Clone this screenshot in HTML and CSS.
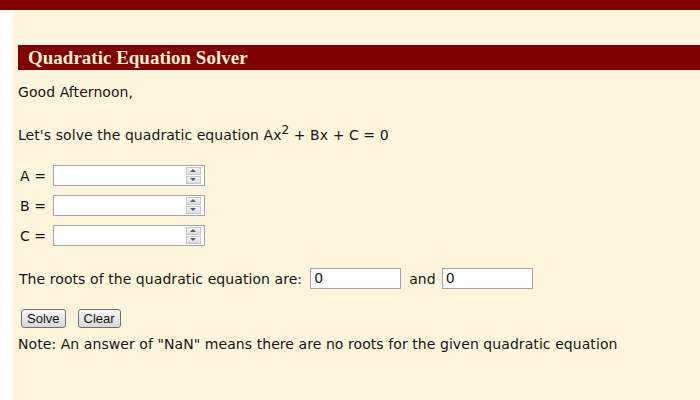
FILE: index.html
```html
<!DOCTYPE html>
<html>
<head>
<meta charset="utf-8">
<title>Quadratic Equation Solver</title>
<link rel="stylesheet" href="styles.css">
</head>
<body>
<div class="topbar"></div>
<div class="page">
  <h1 class="title">Quadratic Equation Solver</h1>
  <p class="greet">Good Afternoon,</p>
  <p class="intro">Let's solve the quadratic equation Ax<sup>2</sup> + Bx + C = 0</p>
  <div class="coeffs">
    <div class="row"><span class="lbl">A =</span><span class="num"><span class="spin"><span class="sb up"></span><span class="sb down"></span></span></span></div>
    <div class="row"><span class="lbl">B =</span><span class="num"><span class="spin"><span class="sb up"></span><span class="sb down"></span></span></span></div>
    <div class="row"><span class="lbl">C =</span><span class="num"><span class="spin"><span class="sb up"></span><span class="sb down"></span></span></span></div>
  </div>
  <div class="roots"><span>The roots of the quadratic equation are:</span><span class="out">0</span><span>and</span><span class="out">0</span></div>
  <div class="buttons"><span class="btn">Solve</span><span class="btn">Clear</span></div>
  <p class="note">Note: An answer of "NaN" means there are no roots for the given quadratic equation</p>
</div>
</body>
</html>
```
FILE: styles.css
```css
html, body { margin: 0; padding: 0; background: #ffffff; }
body { font-family: "DejaVu Sans", Verdana, sans-serif; font-size: 14px; color: #151515; letter-spacing: 0.07px; }
.topbar { height: 10px; background: #800000; }
.page { margin-left: 13px; background: #fff5dc; height: 390px; padding: 35px 0 0 5px; box-sizing: border-box; }
.title { margin: 0; background: #800000; color: #fff0d0; font-family: "Liberation Serif", "Times New Roman", serif; font-size: 19px; font-weight: bold; height: 25px; line-height: 25px; padding-left: 10px; letter-spacing: 0; }
.greet { margin: 14px 0 0 0; line-height: 17px; }
.intro { margin: 26px 0 0 0; line-height: 17px; }
.intro sup { font-size: 12px; line-height: 0; }
.coeffs { margin-top: 21px; display: flex; flex-direction: column; gap: 9px; }
.row { display: flex; align-items: center; gap: 6px; padding-left: 2px; }
.lbl { width: 27px; }
.num { width: 147px; height: 19px; border: 1px solid #a5a5a5; background: #fff; display: flex; justify-content: flex-end; align-items: center; padding-right: 3px; }
.spin { display: flex; flex-direction: column; gap: 1px; }
.sb { width: 15px; height: 8px; background: linear-gradient(#f6f6f6, #dcdcdc); border: 1px solid #c8c8c8; box-sizing: border-box; position: relative; }
.sb::after { content: ""; position: absolute; left: 3px; width: 0; height: 0; border-left: 3.5px solid transparent; border-right: 3.5px solid transparent; }
.up::after { top: 1px; border-bottom: 3px solid #4a5a8a; }
.down::after { top: 1px; border-top: 3px solid #4a5a8a; }
.roots { margin-top: 22px; display: flex; align-items: center; padding-left: 1px; }
.out { display: inline-block; box-sizing: border-box; width: 91px; height: 21px; border: 1px solid #a5a5a5; background: #fff; line-height: 19px; padding-left: 3px; margin: 0 8px 0 8px; }
.out:last-child { margin-left: 6px; }
.buttons { margin-top: 20px; display: flex; gap: 12px; padding-left: 3px; }
.btn { font-family: "Liberation Sans", Arial, sans-serif; font-size: 13px; color: #111; border: 1px solid #707070; border-radius: 3px; background: linear-gradient(#f8f8f8, #d8d8d8); padding: 0 5px; height: 17px; line-height: 17px; letter-spacing: 0; }
.note { margin: 8px 0 0 0; line-height: 17px; }
```
